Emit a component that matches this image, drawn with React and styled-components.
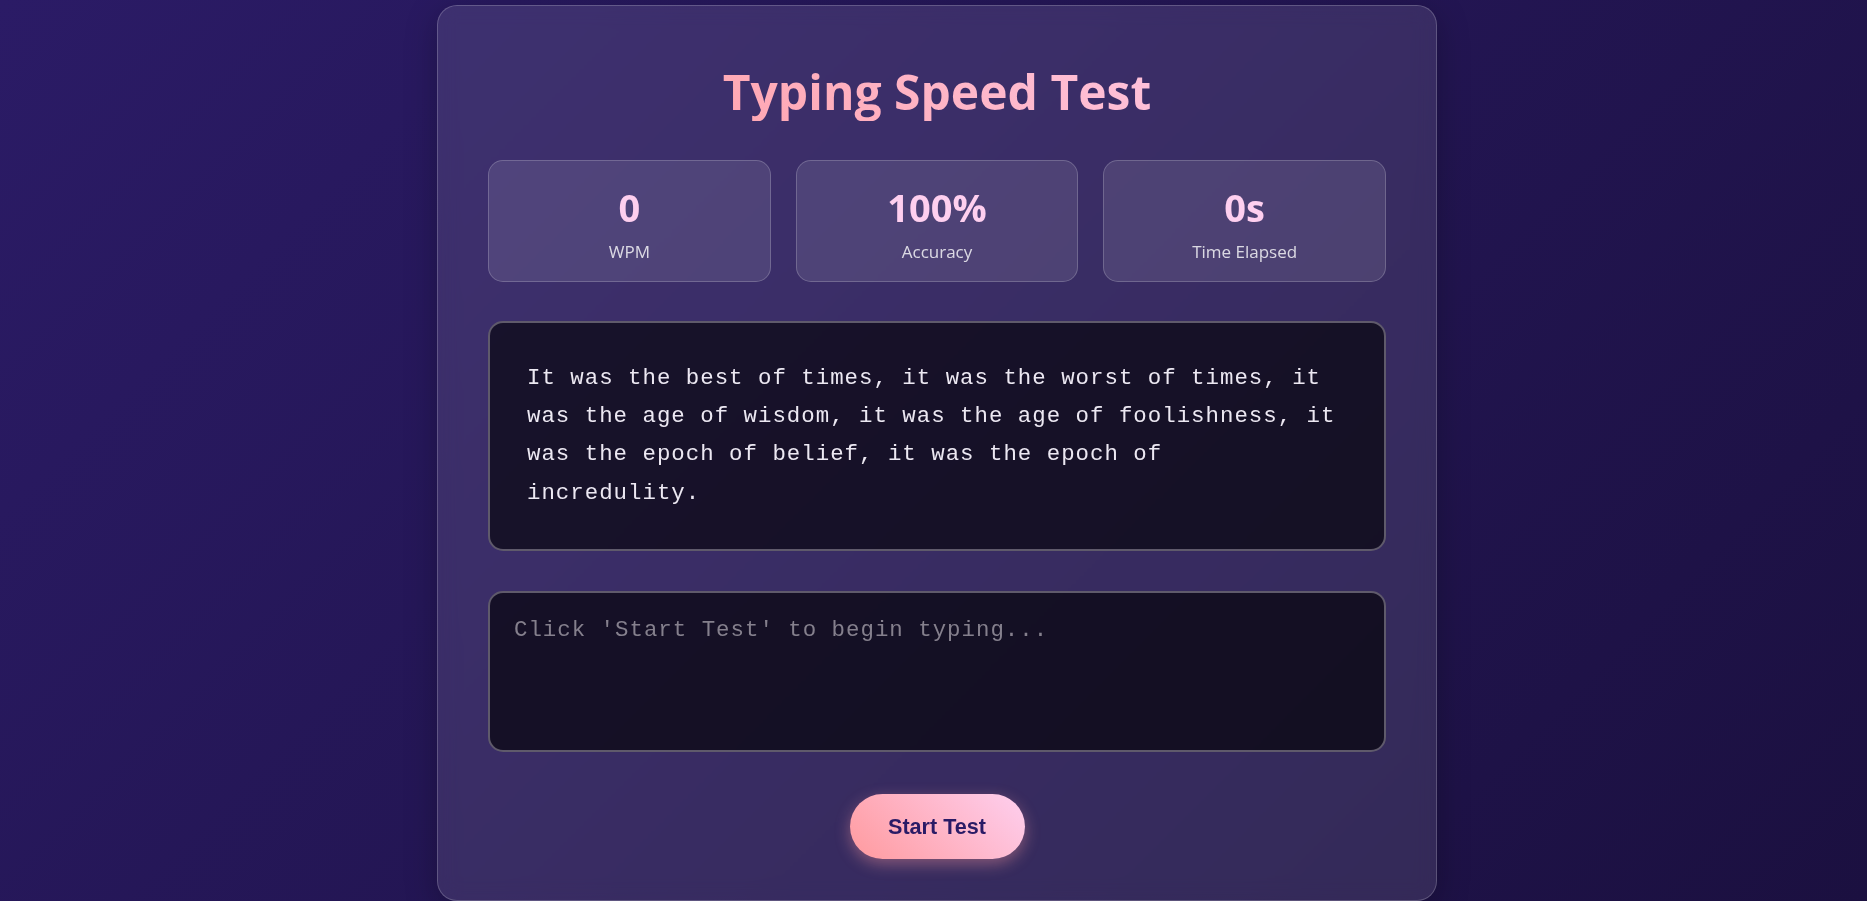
import React, { useState } from "react";
import styled, { createGlobalStyle } from "styled-components";

const passage =
  "It was the best of times, it was the worst of times, it was the age of wisdom, it was the age of foolishness, it was the epoch of belief, it was the epoch of incredulity.";

export default function App() {
  const [typed, setTyped] = useState("");

  return (
    <>
      <GlobalStyle />
      <Page>
        <Card>
          <Title>Typing Speed Test</Title>
          <Stats>
            <Stat>
              <Value>0</Value>
              <Label>WPM</Label>
            </Stat>
            <Stat>
              <Value>100%</Value>
              <Label>Accuracy</Label>
            </Stat>
            <Stat>
              <Value>0s</Value>
              <Label>Time Elapsed</Label>
            </Stat>
          </Stats>
          <Passage>{passage}</Passage>
          <Input
            value={typed}
            onChange={(e) => setTyped(e.target.value)}
            placeholder="Click 'Start Test' to begin typing..."
            disabled
          />
          <Actions>
            <StartButton>Start Test</StartButton>
          </Actions>
        </Card>
      </Page>
    </>
  );
}

const GlobalStyle = createGlobalStyle`
  * {
    box-sizing: border-box;
  }

  html, body {
    margin: 0;
    padding: 0;
  }

  body {
    min-height: 100vh;
    font-family: "Open Sans", "Noto Sans", sans-serif;
    background: linear-gradient(135deg, #2b1b66 0%, #1b1040 100%);
    background-attachment: fixed;
    overflow: hidden;
  }
`;

const Page = styled.div`
  display: flex;
  justify-content: center;
  padding: 5px 0 0 7px;
  min-height: 100vh;
`;

const Card = styled.div`
  width: 1000px;
  display: flex;
  flex-direction: column;
  padding: 40px 50px;
  border-radius: 20px;
  border: 1px solid rgba(255, 255, 255, 0.2);
  background: rgba(255, 255, 255, 0.1);
  backdrop-filter: blur(10px);
  box-shadow: 0 8px 32px rgba(0, 0, 0, 0.25);
`;

const Title = styled.h1`
  margin: 17px 0 39.4px;
  font-size: 48px;
  line-height: 57.6px;
  font-weight: 700;
  text-align: center;
  background: linear-gradient(45deg, #ff9a9e 0%, #fecfef 100%);
  -webkit-background-clip: text;
  background-clip: text;
  color: transparent;
`;

const Stats = styled.div`
  display: grid;
  grid-template-columns: repeat(3, 1fr);
  gap: 25px;
  margin-bottom: 38.7px;
`;

const Stat = styled.div`
  display: flex;
  flex-direction: column;
  align-items: center;
  padding: 24px 10px 19px;
  border-radius: 15px;
  border: 1px solid rgba(255, 255, 255, 0.2);
  background: rgba(255, 255, 255, 0.1);
`;

const Value = styled.div`
  font-size: 38px;
  line-height: 44px;
  font-weight: 700;
  color: #fecfef;
`;

const Label = styled.div`
  margin-top: 13px;
  font-size: 17px;
  line-height: 20px;
  color: rgba(255, 255, 255, 0.8);
`;

const monoText = `
  font-family: "Liberation Mono", "Courier New", monospace;
  font-size: 22.4px;
  letter-spacing: 1px;
`;

const Passage = styled.div`
  ${monoText}
  line-height: 38.4px;
  padding: 36px 36px 37px 37px;
  margin-bottom: 40px;
  border-radius: 15px;
  border: 2px solid #5f5a6b;
  background: rgba(0, 0, 0, 0.6);
  color: #ece8f2;
`;

const Input = styled.textarea`
  ${monoText}
  display: block;
  width: 100%;
  height: 161px;
  padding: 24px;
  resize: none;
  outline: none;
  border-radius: 15px;
  border: 2px solid #5f5a6b;
  background: rgba(0, 0, 0, 0.62);
  color: #f0ecf5;

  &::placeholder {
    color: #85808d;
  }
`;

const Actions = styled.div`
  display: flex;
  justify-content: center;
  margin-top: 42px;
`;

const StartButton = styled.button`
  padding: 19.6px 38.5px;
  border: none;
  border-radius: 50px;
  font-family: "Liberation Sans", Arial, sans-serif;
  font-size: 21.6px;
  font-weight: 700;
  color: #2a1b66;
  background: linear-gradient(45deg, #ff9a9e 0%, #fecfef 100%);
  box-shadow: 0 5px 15px rgba(255, 154, 158, 0.4);
  cursor: pointer;
`;
